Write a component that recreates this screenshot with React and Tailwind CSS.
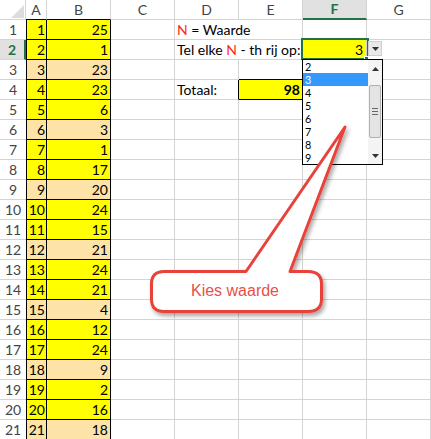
import React from "react";

const GRID = "grid grid-cols-[26px_21px_64px_64px_64px_64px_64px_64px] h-5";
const data = [25, 1, 23, 23, 6, 3, 1, 17, 20, 24, 15, 21, 24, 21, 4, 12, 24, 9, 2, 16, 18];
const G = "border-r border-b border-[#d4d4d4]";

function Red() {
  return <span className="text-[#ff2a1a]">N</span>;
}

function RowHeader({ r }) {
  if (r === 2) {
    return (
      <div className="border-b border-r-2 border-b-[#d4d4d4] border-r-[#217346] bg-[#e1e1e1] text-center leading-[19px] font-bold text-[#217346]">
        {r}
      </div>
    );
  }
  return <div className="border-b border-[#d4d4d4] text-center leading-[19px] text-[#444]">{r}</div>;
}

function Row({ r, v }) {
  const bg = r % 3 === 0 ? "bg-[#fde3a7]" : "bg-[#ffff00]";
  let rest;
  if (r === 1) {
    rest = (
      <>
        <div className={`${G} col-span-2 pl-[2px] leading-[19px] whitespace-nowrap`}>
          <Red /> = Waarde
        </div>
        <div className={G} />
        <div className={G} />
      </>
    );
  } else if (r === 2) {
    rest = (
      <>
        <div className={`${G} col-span-2 pl-[2px] leading-[19px] whitespace-nowrap`}>
          Tel elke <Red /> - th rij op:
        </div>
        <div className={`${G} bg-[#ffff00] text-right pr-[3px] leading-[19px]`}>3</div>
        <div className={G} />
      </>
    );
  } else if (r === 3) {
    rest = (
      <>
        <div className={G} />
        <div className="border-r border-r-[#d4d4d4] border-b border-b-black" />
        <div className={G} />
        <div className={G} />
      </>
    );
  } else if (r === 4) {
    rest = (
      <>
        <div className="border-b border-b-[#d4d4d4] border-r border-r-black pl-[2px] leading-[19px]">Totaal:</div>
        <div className="border-r border-b border-black bg-[#ffff00] text-right pr-[2px] leading-[19px] font-bold">98</div>
        <div className={G} />
        <div className={G} />
      </>
    );
  } else {
    rest = (
      <>
        <div className={G} />
        <div className={G} />
        <div className={G} />
        <div className={G} />
      </>
    );
  }
  return (
    <div className={GRID}>
      <RowHeader r={r} />
      <div className={`border-l border-r border-b border-black ${bg} text-right pr-[1px] leading-[19px]`}>{r}</div>
      <div className={`border-r border-b border-black ${bg} text-right pr-[2px] leading-[19px]`}>{v}</div>
      <div className={G} />
      {rest}
    </div>
  );
}

function Tri({ down }) {
  return (
    <svg width="7" height="4" viewBox="0 0 7 4">
      {down ? <path d="M0 0 L7 0 L3.5 4 Z" fill="#333" /> : <path d="M0 4 L7 4 L3.5 0 Z" fill="#333" />}
    </svg>
  );
}

export default function App() {
  return (
    <div className="relative w-[431px] h-[439px] overflow-hidden bg-white font-['Lato',sans-serif] text-[14px] text-black">
      <div className={GRID}>
        <div className="border-r border-b border-[#d4d4d4] flex items-end justify-end pr-[1px] pb-[1px]">
          <svg width="13" height="13" viewBox="0 0 13 13">
            <path d="M0 13 L13 13 L13 0 Z" fill="#dcdcdc" />
          </svg>
        </div>
        <div className="border-r border-r-[#d4d4d4] border-b border-b-black text-center leading-[19px] text-[#444]">A</div>
        <div className="border-r border-r-[#d4d4d4] border-b border-b-black text-center leading-[19px] text-[#444]">B</div>
        <div className={`${G} text-center leading-[19px] text-[#444]`}>C</div>
        <div className={`${G} text-center leading-[19px] text-[#444]`}>D</div>
        <div className={`${G} text-center leading-[19px] text-[#444]`}>E</div>
        <div className="border-r border-r-[#d4d4d4] border-b-2 border-b-[#217346] bg-[#e1e1e1] text-center leading-[18px] font-bold text-[#217346]">F</div>
        <div className={`${G} text-center leading-[19px] text-[#444]`}>G</div>
      </div>
      {data.map((v, i) => (
        <Row key={i} r={i + 1} v={v} />
      ))}

      {/* selection border on F2 */}
      <div className="absolute left-[301px] top-[38px] w-[68px] h-[22px] border-2 border-[#217346]" />
      <div className="absolute left-[364px] top-[56px] w-[5px] h-[5px] bg-[#217346] border border-white" />

      {/* dropdown button */}
      <div className="absolute left-[368px] top-[41px] w-[14px] h-[15px] bg-[#e9e9e9] border border-[#cfcfcf] flex items-center justify-center">
        <Tri down />
      </div>

      {/* dropdown list */}
      <div className="absolute left-[302px] top-[59px] w-[81px] h-[106px] border border-black bg-white flex">
        <div className="w-[65px] flex flex-col">
          {[2, 3, 4, 5, 6, 7, 8, 9].map((n) => (
            <div
              key={n}
              className={`h-[13px] leading-[13px] pl-[2px] text-[10.8px] ${n === 3 ? "bg-[#3399ff] text-white" : "text-black"}`}
            >
              {n}
            </div>
          ))}
        </div>
        <div className="w-[14px] bg-[#f4f4f4] flex flex-col">
          <div className="h-[18px] flex items-center justify-center">
            <Tri />
          </div>
          <div className="mt-[7px] mx-[1px] h-[53px] border border-[#b0b0b0] rounded-[2px] bg-[#e4e4e4] flex flex-col items-center justify-center gap-[2px]">
            <div className="w-[6px] h-px bg-[#666]" />
            <div className="w-[6px] h-px bg-[#666]" />
            <div className="w-[6px] h-px bg-[#666]" />
          </div>
          <div className="flex-1" />
          <div className="h-[16px] flex items-center justify-center">
            <Tri down />
          </div>
        </div>
      </div>

      {/* callout */}
      <svg className="absolute left-0 top-0 pointer-events-none" width="431" height="439" viewBox="0 0 431 439">
        <defs>
          <filter id="sh" x="-20%" y="-20%" width="140%" height="160%">
            <feDropShadow dx="2" dy="3" stdDeviation="2" floodColor="#000" floodOpacity="0.35" />
          </filter>
        </defs>
        <path
          d="M164,271.5 L246,271.5 L345,127 L290,271.5 L308,271.5 Q321.5,271.5 321.5,284 L321.5,299 Q321.5,311.5 308,311.5 L164,311.5 Q151.5,311.5 151.5,299 L151.5,284 Q151.5,271.5 164,271.5 Z"
          fill="#fff"
          stroke="#e8433a"
          strokeWidth="3"
          strokeLinejoin="round"
          filter="url(#sh)"
        />
        <text
          x="235"
          y="296"
          textAnchor="middle"
          fontFamily="'Liberation Sans', Arial, sans-serif"
          fontSize="16"
          fill="#e8504a"
        >
          Kies waarde
        </text>
      </svg>
    </div>
  );
}
